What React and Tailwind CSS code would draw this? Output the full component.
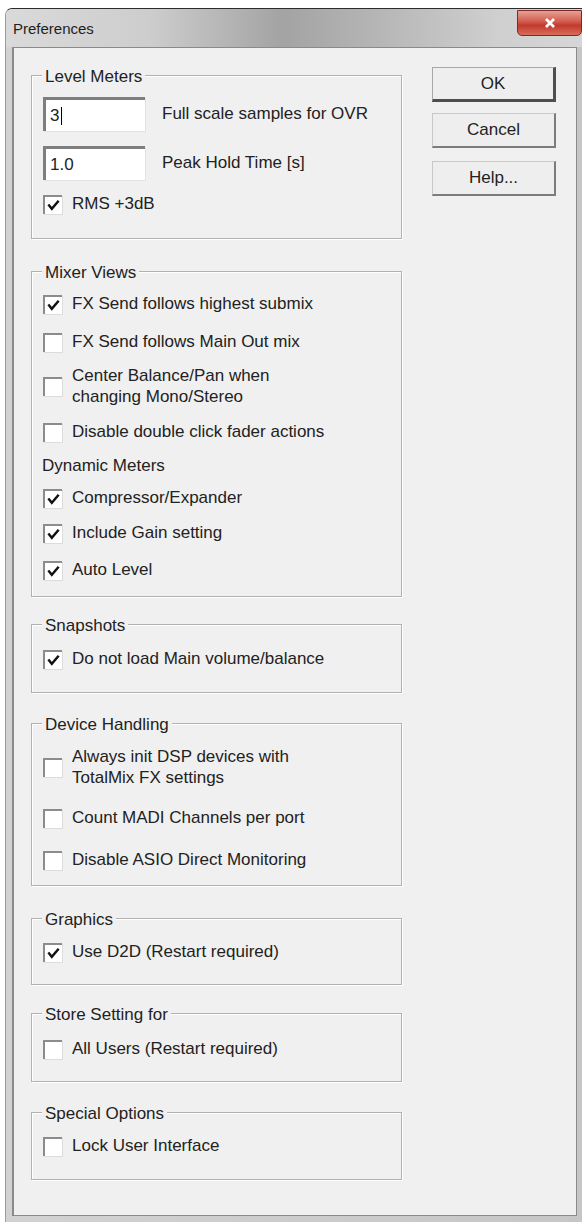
import React from 'react';

// Classic Windows checkbox with sunken edges
const CheckBox = ({ checked }) => (
  <div className="flex items-center justify-center w-[19px] h-[19px] shrink-0 bg-white border-t-2 border-l-2 border-[#8c8c8c] border-r-0 border-b-0 shadow-[1px_1px_0_#dcdcdc]">
    {checked && (
      <svg viewBox="0 0 16 16" className="w-[15px] h-[15px]">
        <path d="M2.5 7 L6.2 11.5 L13.5 3" fill="none" stroke="#111" strokeWidth="2.6" strokeLinejoin="miter" />
      </svg>
    )}
  </div>
);

const CheckRow = ({ checked, children, mt = '', tall = false }) => (
  <div className={`flex items-center pl-[11px] ${tall ? 'h-[42px] leading-[21px]' : 'h-[20px] leading-[20px]'} ${mt}`}>
    <CheckBox checked={checked} />
    <span className="ml-[10px]">{children}</span>
  </div>
);

// Group box: etched frame with its caption sitting on the top edge
const GroupBox = ({ title, className, children }) => (
  <div className={`relative w-[371px] border border-[#b2b2b2] shadow-[inset_1px_1px_0_#ffffff,1px_1px_0_#ffffff] ${className}`}>
    <span className="absolute left-[10px] -top-[9px] px-[3px] bg-[#f0f0f0] leading-[20px] whitespace-nowrap">
      {title}
    </span>
    {children}
  </div>
);

const TextBox = ({ value, caret }) => (
  <div className="flex items-center w-[102px] h-[34px] bg-white border-t-[3px] border-l-[3px] border-[#7e7e7e] border-r-0 border-b-0 shadow-[1px_1px_0_#e2e2e2] pl-[4px]">
    <span>{value}</span>
    {caret && <span className="ml-[2px] w-[1px] h-[18px] bg-black" />}
  </div>
);

const Button = ({ children, primary, className = '' }) => (
  <button
    className={`w-[124px] h-[35px] bg-[#eeeeee] text-center ${
      primary
        ? 'border-t border-l border-[#a8a8a8] border-r-[3px] border-b-[3px] border-r-[#4e4e4e] border-b-[#4e4e4e]'
        : 'border-t border-l border-[#c8c8c8] border-r-2 border-b-2 border-r-[#7c7c7c] border-b-[#7c7c7c]'
    } ${className}`}
  >
    {children}
  </button>
);

export default function App() {
  return (
    <div className="w-[582px] h-[1225px] bg-white overflow-hidden pt-[8px] pl-[5px] font-['Liberation_Sans',Arial,sans-serif] text-[17px] text-[#222]">
      <div className="flex flex-col w-[577px] h-[1214px] rounded-tl-[7px] border-t border-[#2c2c2c] border-l border-l-[#9c9c9c] bg-[#c9c9c9] overflow-hidden">
        {/* Title bar */}
        <div className="flex items-start justify-between h-[38px] bg-[linear-gradient(to_right,#dadada_0%,#cdcdcd_25%,#a3a3a3_48%,#b6b6b6_65%,#cfcfcf_85%,#d6d6d6_100%)]">
          <span className="mt-[11px] ml-[7px] text-[15px] leading-[18px] text-[#1e1e1e]">Preferences</span>
          <div className="flex items-center justify-center w-[65px] h-[26px] mt-[1px] rounded-b-[5px] border border-[#7e2b22] bg-[linear-gradient(to_bottom,#e6a094_0%,#d25a4c_45%,#c23a2c_60%,#d86c5c_100%)]">
            <svg viewBox="0 0 12 12" className="w-[12px] h-[12px]">
              <path d="M2 2 L10 10 M10 2 L2 10" stroke="#fff" strokeWidth="2.6" />
            </svg>
          </div>
        </div>

        {/* Frame around client area */}
        <div className="flex-1 flex flex-col pl-[6px] pr-[5px] pb-[6px] bg-[linear-gradient(to_right,#d2d2d2,#c6c6c6)]">
          <div className="flex-1 flex bg-[#f0f0f0] border border-[#8a8a8a] border-l-2 border-l-[#8a8a8a]">
            {/* Left column of group boxes */}
            <div className="flex flex-col pl-[17px]">
              <GroupBox title="Level Meters" className="mt-[27px] h-[164px] pt-[21px] pl-[11px]">
                <div className="flex items-center">
                  <TextBox value="3" caret />
                  <span className="ml-[17px]">Full scale samples for OVR</span>
                </div>
                <div className="flex items-center mt-[15px]">
                  <TextBox value="1.0" />
                  <span className="ml-[17px]">Peak Hold Time [s]</span>
                </div>
                <div className="flex items-center h-[20px] mt-[14px]">
                  <CheckBox checked />
                  <span className="ml-[10px]">RMS +3dB</span>
                </div>
              </GroupBox>

              <GroupBox title="Mixer Views" className="mt-[32px] h-[326px] pt-[22px]">
                <CheckRow checked>FX Send follows highest submix</CheckRow>
                <CheckRow mt="mt-[18px]">FX Send follows Main Out mix</CheckRow>
                <CheckRow mt="mt-[13px]" tall>
                  Center Balance/Pan when<br />changing Mono/Stereo
                </CheckRow>
                <CheckRow mt="mt-[15px]">Disable double click fader actions</CheckRow>
                <div className="h-[20px] leading-[20px] mt-[14px] pl-[10px]">Dynamic Meters</div>
                <CheckRow checked mt="mt-[12px]">Compressor/Expander</CheckRow>
                <CheckRow checked mt="mt-[15px]">Include Gain setting</CheckRow>
                <CheckRow checked mt="mt-[17px]">Auto Level</CheckRow>
              </GroupBox>

              <GroupBox title="Snapshots" className="mt-[27px] h-[69px] pt-[24px]">
                <CheckRow checked>Do not load Main volume/balance</CheckRow>
              </GroupBox>

              <GroupBox title="Device Handling" className="mt-[30px] h-[163px] pt-[22px]">
                <CheckRow tall>
                  Always init DSP devices with<br />TotalMix FX settings
                </CheckRow>
                <CheckRow mt="mt-[20px]">Count MADI Channels per port</CheckRow>
                <CheckRow mt="mt-[22px]">Disable ASIO Direct Monitoring</CheckRow>
              </GroupBox>

              <GroupBox title="Graphics" className="mt-[32px] h-[67px] pt-[23px]">
                <CheckRow checked>Use D2D (Restart required)</CheckRow>
              </GroupBox>

              <GroupBox title="Store Setting for" className="mt-[28px] h-[69px] pt-[25px]">
                <CheckRow>All Users (Restart required)</CheckRow>
              </GroupBox>

              <GroupBox title="Special Options" className="mt-[30px] h-[68px] pt-[23px]">
                <CheckRow>Lock User Interface</CheckRow>
              </GroupBox>
            </div>

            {/* Right column of buttons */}
            <div className="flex flex-col ml-[30px] pt-[19px]">
              <Button primary>OK</Button>
              <Button className="mt-[11px]">Cancel</Button>
              <Button className="mt-[13px]">Help...</Button>
            </div>
          </div>
        </div>
      </div>
    </div>
  );
}
